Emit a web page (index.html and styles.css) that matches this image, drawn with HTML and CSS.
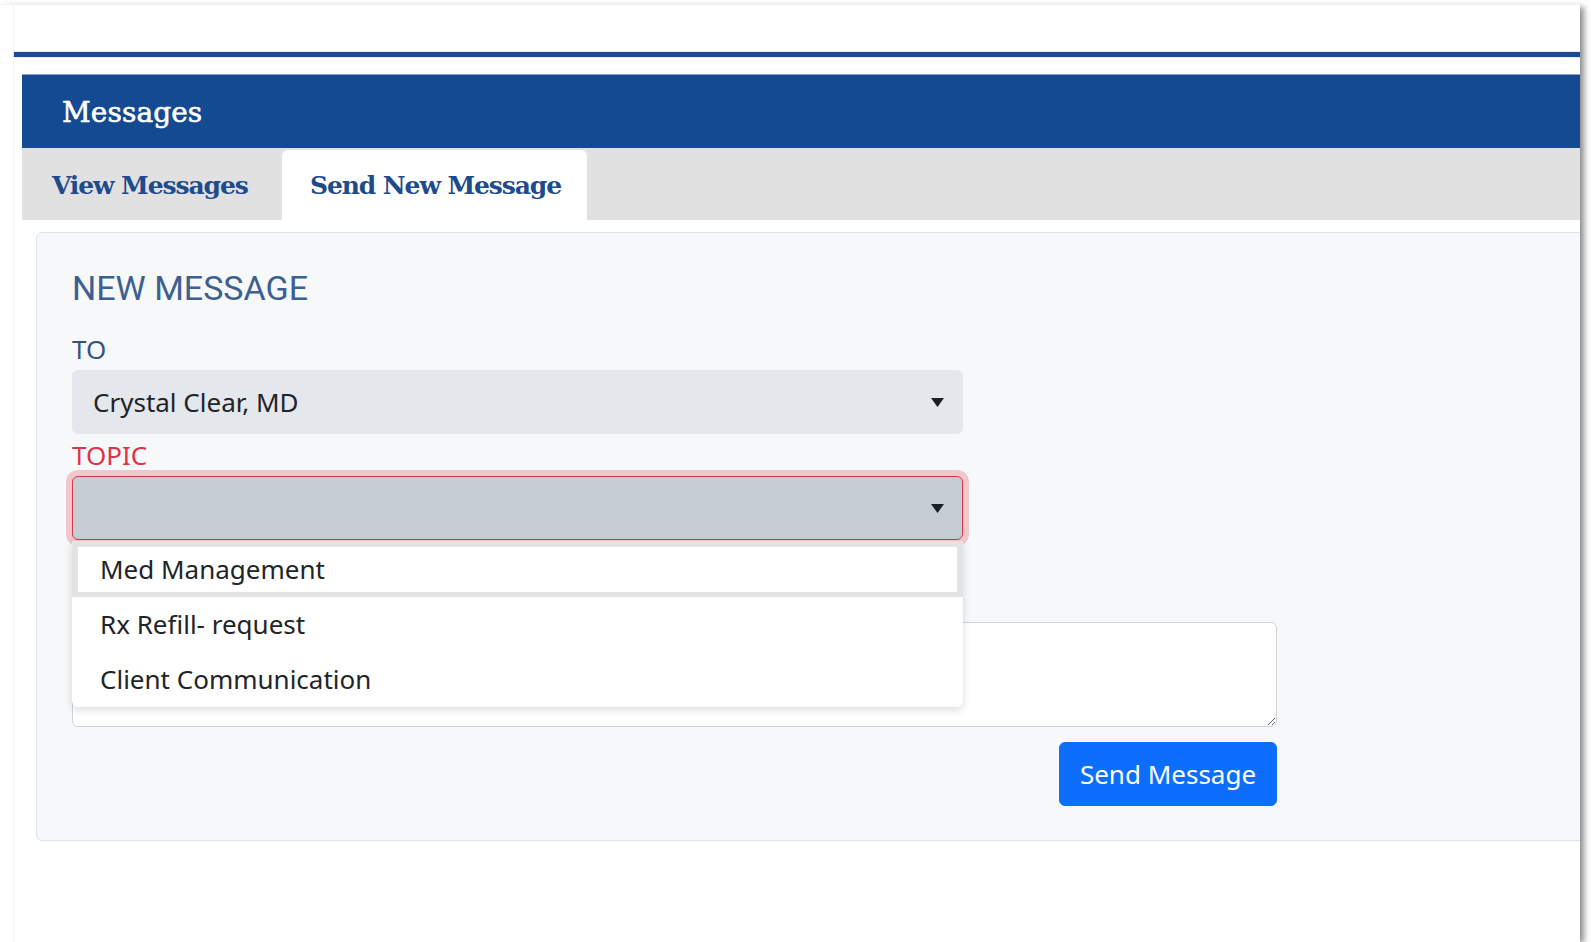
FILE: index.html
```html
<!DOCTYPE html>
<html lang="en">
<head>
<meta charset="utf-8">
<title>Messages</title>
<link rel="stylesheet" href="styles.css">
</head>
<body>
<div class="screen">
  <div class="page">
    <div class="rule"></div>
    <section class="panel">
      <h1 class="panel-title">Messages</h1>
      <nav class="tabs">
        <a class="tab">View Messages</a>
        <a class="tab active">Send New Message</a>
      </nav>
      <div class="card">
        <h2 class="card-title">NEW MESSAGE</h2>
        <form class="message-form">
          <label class="field-label">TO</label>
          <div class="select">
            <span>Crystal Clear, MD</span>
            <svg class="caret" width="13" height="9" viewBox="0 0 13 9"><polygon points="0,0 13,0 6.5,9"/></svg>
          </div>
          <label class="field-label invalid">TOPIC</label>
          <div class="select-wrap">
            <div class="select is-invalid">
              <span></span>
              <svg class="caret" width="13" height="9" viewBox="0 0 13 9"><polygon points="0,0 13,0 6.5,9"/></svg>
            </div>
            <ul class="options">
              <li class="option selected">Med Management</li>
              <li class="option">Rx Refill- request</li>
              <li class="option">Client Communication</li>
            </ul>
          </div>
          <textarea class="message-body"></textarea>
          <div class="actions">
            <button type="button" class="btn-send">Send Message</button>
          </div>
        </form>
      </div>
    </section>
  </div>
</div>
</body>
</html>
```

FILE: styles.css
```css
html, body {
  margin: 0;
  padding: 0;
  background: #ffffff;
}

.screen {
  margin-top: 4px;
  width: 1580px;
  height: 938px;
  box-sizing: border-box;
  border-top: 1px solid #f1f2f3;
  background: #ffffff;
  box-shadow: 5px 2px 6px -1px rgba(0, 0, 0, 0.45);
  overflow: hidden;
}

.page {
  margin-left: 13px;
  padding-top: 47px;
  height: 100%;
  box-sizing: border-box;
  border-left: 1px solid #f3f4f5;
}

.rule {
  height: 5px;
  background: #1b4b91;
  box-shadow: 0 0 1px rgba(27, 75, 145, 0.6);
}

.panel {
  margin-top: 17px;
  margin-left: 8px;
}

.panel-title {
  margin: 0;
  height: 74px;
  box-sizing: border-box;
  padding: 2px 0 0 40px;
  background: #134a91;
  border-top: 1px solid #8aa5cc;
  color: #ffffff;
  font-family: "DejaVu Serif", "Liberation Serif", serif;
  font-weight: 400;
  font-size: 28px;
  line-height: 71px;
  letter-spacing: 0.1px;
  -webkit-text-stroke: 0.6px #ffffff;
}

.tabs {
  display: flex;
  align-items: flex-end;
  height: 72px;
  background: #e1e1e1;
}

.tab {
  display: block;
  box-sizing: border-box;
  height: 72px;
  color: #1d4b8c;
  font-family: "DejaVu Serif", "Liberation Serif", serif;
  font-weight: 700;
  font-size: 25px;
  line-height: 75px;
  letter-spacing: -1.1px;
  white-space: nowrap;
}

.tab:first-child {
  width: 260px;
  padding-left: 30px;
}

.tab.active {
  width: 305px;
  height: 70px;
  line-height: 71px;
  padding-left: 28px;
  background: #ffffff;
  border-radius: 6px 6px 0 0;
}

.card {
  margin: 12px 0 0 14px;
  width: 1620px;
  height: 609px;
  box-sizing: border-box;
  padding: 35px 35px 33px;
  background: #f7f8fa;
  border: 1px solid #dfe2e6;
  border-radius: 6px;
}

.card-title {
  margin: 0;
  color: #3d5f92;
  font-family: Roboto, "Liberation Sans", sans-serif;
  font-weight: 400;
  font-size: 34px;
  line-height: 40px;
}

.message-form {
  margin-top: 22px;
  width: 1205px;
  display: flex;
  flex-direction: column;
  font-family: "Noto Sans", "Open Sans", sans-serif;
  font-size: 26px;
}

.field-label {
  display: block;
  color: #33557c;
  line-height: 39px;
}

.field-label.invalid {
  margin-top: 2px;
  color: #dc3545;
}

.select-wrap {
  position: relative;
  width: 891px;
  margin-top: 1px;
}

.select {
  width: 891px;
  height: 64px;
  box-sizing: border-box;
  margin-top: 1px;
  padding: 0 18px 0 20px;
  display: flex;
  align-items: center;
  justify-content: space-between;
  background: #e4e7eb;
  border: 1px solid #e4e7eb;
  border-radius: 6px;
  color: #212529;
  line-height: 39px;
}

.select-wrap .select {
  margin-top: 0;
}

.select.is-invalid {
  background: #c5ccd4;
  border-color: #dc3545;
  box-shadow: 0 0 0 6px rgba(220, 53, 69, 0.25);
}

.caret {
  flex: none;
  fill: #1b1f24;
}

.options {
  position: absolute;
  top: 65px;
  left: 0;
  z-index: 2;
  width: 891px;
  margin: 0;
  padding: 0;
  list-style: none;
  background: #ffffff;
  border-radius: 0 0 6px 6px;
  box-shadow: 0 3px 8px rgba(0, 0, 0, 0.14);
  color: #212529;
}

.option {
  height: 55px;
  line-height: 55px;
  padding-left: 28px;
  box-sizing: border-box;
}

.option.selected {
  height: 56px;
  line-height: 45px;
  padding-left: 22px;
  border: 6px solid #e3e3e3;
  border-bottom-width: 5px;
}

.message-body {
  margin-top: 82px;
  width: 1205px;
  height: 105px;
  box-sizing: border-box;
  padding: 10px 20px;
  background: #ffffff;
  border: 1px solid #ced4da;
  border-radius: 6px;
  font-family: "Noto Sans", "Open Sans", sans-serif;
  font-size: 26px;
  resize: vertical;
}

.actions {
  display: flex;
  justify-content: flex-end;
  margin-top: 15px;
}

.btn-send {
  width: 218px;
  height: 64px;
  padding: 0;
  background: #0d6efd;
  border: 1px solid #0d6efd;
  border-radius: 6px;
  color: #ffffff;
  font-family: "Noto Sans", "Open Sans", sans-serif;
  font-size: 26px;
  line-height: 39px;
  cursor: pointer;
}
```
